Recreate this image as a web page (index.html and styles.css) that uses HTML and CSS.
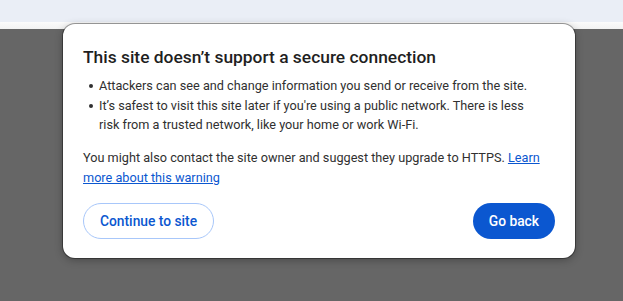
FILE: index.html
```html
<!DOCTYPE html>
<html>
  <head>
    <title>Not secure</title>
    <link rel="stylesheet" href="styles.css">
  </head>
  <body>
    <div class="page">
      <div class="toolbar"></div>
      <div class="toolbar-edge"></div>
      <div class="backdrop"></div>
    </div>

    <div class="dialog">
      <h2 class="dialog-title">This site doesn’t support a secure connection</h2>
      <ul class="reasons">
        <li>Attackers can see and change information you send or receive from the site.</li>
        <li>It’s safest to visit this site later if you're using a public network. There is less risk from a trusted network, like your home or work Wi-Fi.</li>
      </ul>
      <p class="note">You might also contact the site owner and suggest they upgrade to HTTPS. <a href="#">Learn more about this warning</a></p>
      <div class="actions">
        <button class="btn btn-outline">Continue to site</button>
        <button class="btn btn-filled">Go back</button>
      </div>
    </div>
  </body>
</html>
```

FILE: styles.css
```css
body {
  margin: 0;
  font-family: Roboto, "Noto Sans", sans-serif;
  width: 623px;
  height: 301px;
  overflow: hidden;
  position: relative;
}
.page {
  display: flex;
  flex-direction: column;
  height: 100%;
}
.toolbar {
  height: 22px;
  background: #eaeef6;
}
.toolbar-edge {
  height: 7px;
  background: linear-gradient(#fbfbfb, #f2f2f2);
}
.backdrop {
  flex: 1;
  background: #666666;
}
.dialog {
  position: absolute;
  left: 63px;
  top: 24px;
  width: 512px;
  height: 234px;
  box-sizing: border-box;
  padding: 21px 20px 19px 20px;
  background: #fff;
  border-radius: 12px;
  box-shadow: 0 0 0 1px rgba(0, 0, 0, 0.35), 0 2px 8px rgba(0, 0, 0, 0.3);
  display: flex;
  flex-direction: column;
}
.dialog-title {
  margin: 0;
  font-size: 17.4px;
  font-weight: 500;
  line-height: 24px;
  color: #1f1f1f;
}
.reasons {
  list-style: none;
  margin: 7px 0 0 0;
  padding: 0 12px 0 0;
}
.reasons li {
  position: relative;
  padding-left: 16px;
  font-size: 12.7px;
  line-height: 19.5px;
  color: #303030;
}
.reasons li::before {
  content: "";
  position: absolute;
  left: 6px;
  top: 8px;
  width: 4px;
  height: 4px;
  border-radius: 50%;
  background: #303030;
}
.note {
  margin: 13px 0 0 0;
  font-size: 12.7px;
  line-height: 20px;
  color: #303030;
}
.note a {
  color: #0b57d0;
}
.actions {
  margin-top: auto;
  display: flex;
  justify-content: space-between;
}
.btn {
  height: 36px;
  padding: 0 16px;
  border-radius: 18px;
  font-family: Roboto, "Noto Sans", sans-serif;
  font-size: 13.8px;
  font-weight: 500;
  cursor: pointer;
}
.btn-outline {
  background: #fff;
  color: #0b57d0;
  border: 1px solid #a8c7fa;
}
.btn-filled {
  background: #0b57d0;
  color: #fff;
  border: none;
}
```
